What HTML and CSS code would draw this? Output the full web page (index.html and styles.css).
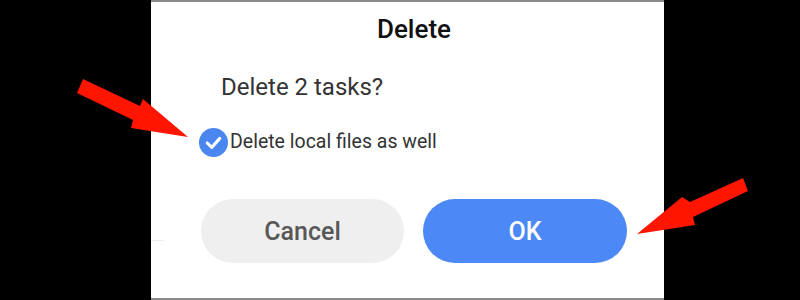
FILE: index.html
```html
<!DOCTYPE html>
<html>
<head>
<meta charset="utf-8">
<link rel="stylesheet" href="styles.css">
</head>
<body>
<div class="dialog">
  <div class="title">Delete</div>
  <div class="message">Delete 2 tasks?</div>
  <div class="check-row">
    <span class="check">
      <svg width="29" height="29" viewBox="0 0 28 28"><circle cx="14" cy="14" r="14" fill="#4a86f0"/><path d="M8 14.5 L12.3 18.8 L20 10" fill="none" stroke="#fff" stroke-width="3" stroke-linecap="round" stroke-linejoin="round"/></svg>
    </span>
    <span class="check-label">Delete local files as well</span>
  </div>
  <div class="buttons">
    <div class="btn btn-cancel">Cancel</div>
    <div class="btn btn-ok">OK</div>
  </div>
  <div class="tick"></div>
</div>
<svg class="arrows" width="800" height="300" viewBox="0 0 800 300">
  <polygon fill="#ff1500" points="83,79 140,106 143,99 188,137 131,128 133,120 77,93"/>
  <polygon fill="#ff1500" points="743,178 690,202 682,197 637,234 695,225 693,217 748,191"/>
</svg>
</body>
</html>
```
FILE: styles.css
```css
html, body {
  margin: 0;
  padding: 0;
}
body {
  width: 800px;
  height: 300px;
  background: #000;
  font-family: Roboto, "Noto Sans", sans-serif;
  position: relative;
  overflow: hidden;
}
.dialog {
  margin-left: 151px;
  width: 513px;
  height: 300px;
  box-sizing: border-box;
  background: #fff;
  border-top: 2px solid #8a8a8a;
  padding: 12px 37px 0 50px;
  display: flex;
  flex-direction: column;
  position: relative;
}
.dialog::after {
  content: "";
  position: absolute;
  left: 0;
  right: 0;
  bottom: 0;
  height: 2px;
  background: #8a8a8a;
}
.title {
  text-align: center;
  font-size: 26px;
  line-height: 30px;
  font-weight: 500;
  color: #111;
}
.message {
  margin-top: 28px;
  padding-left: 20px;
  font-size: 24px;
  line-height: 30px;
  color: #333;
}
.check-row {
  margin-top: 25px;
  margin-left: -2px;
  height: 30px;
  display: flex;
  align-items: center;
  gap: 2px;
}
.check {
  width: 29px;
  height: 29px;
  display: block;
}
.check svg {
  display: block;
}
.check-label {
  font-size: 19.5px;
  line-height: 30px;
  color: #333;
}
.buttons {
  margin-top: 42px;
  display: flex;
  gap: 19px;
}
.btn {
  width: 203px;
  height: 64px;
  border-radius: 32px;
  display: flex;
  align-items: center;
  justify-content: center;
  font-size: 25px;
  font-weight: 500;
}
.btn-cancel {
  background: #efefef;
  color: #585858;
}
.btn-ok {
  width: 204px;
  background: #4c88f6;
  color: #fff;
}
.tick {
  position: absolute;
  left: 0;
  top: 238px;
  width: 13px;
  height: 1px;
  background: #eeeeee;
}
.arrows {
  position: absolute;
  left: 0;
  top: 0;
}
```
